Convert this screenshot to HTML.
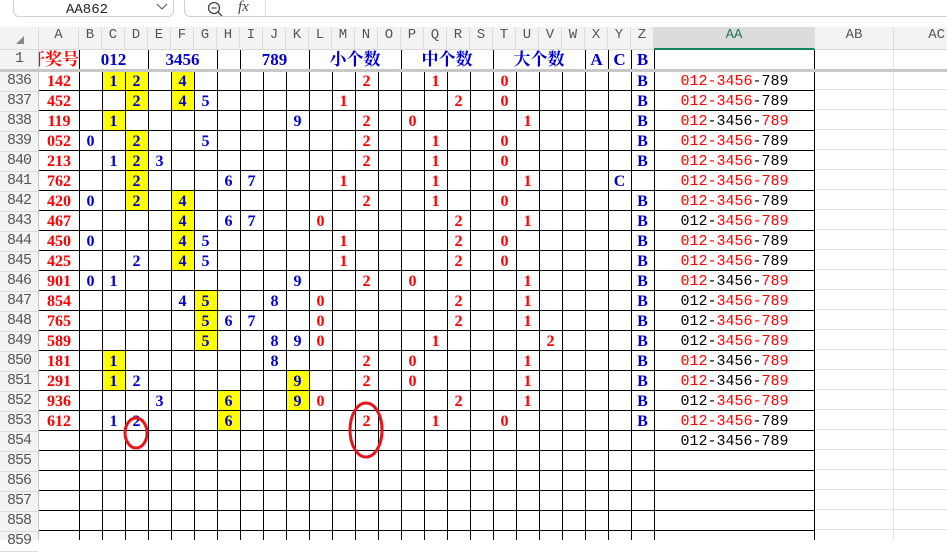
<!DOCTYPE html>
<html><head><meta charset="utf-8"><style>
*{margin:0;padding:0;box-sizing:border-box}
body{width:947px;height:540px;overflow:hidden;background:#fff;position:relative;font-family:"Liberation Serif","Noto Serif CJK SC",serif}
.abs{position:absolute}
#top{left:0;top:0;width:947px;height:27px;background:#fff}
#nb{left:13px;top:-6px;width:161px;height:23px;border:1px solid #d0d0d0;border-radius:6px;font:14px "Liberation Mono",monospace;color:#222}
#fb{left:184px;top:-6px;width:770px;height:23px;border:1px solid #d0d0d0;border-radius:6px}
#colh{left:0;top:27px;width:947px;height:23px;background:#f3f3f3;border-bottom:1px solid #d8d8d8}
.ch{position:absolute;top:0;height:23px;line-height:24px;text-align:center;font:14px "Liberation Mono",monospace;color:#555;border-right:1px solid #dcdcdc}
#rowh{left:0;top:50px;width:39px;height:490px;background:#f3f3f3;border-right:1px solid #c8c8c8}
.rh{position:absolute;left:0;width:38px;height:20px;line-height:21px;text-align:center;font:15px "Liberation Mono",monospace;color:#555;border-bottom:1px solid #dcdcdc;letter-spacing:-1px}
table{position:absolute;left:39px;top:50px;border-collapse:collapse;table-layout:fixed;width:776px}
td{height:20px;padding:0;text-align:center;vertical-align:middle;font-weight:bold;font-size:16px;color:#0000cc;white-space:nowrap;overflow:hidden;line-height:20px}
tr.d td{padding-top:3px;line-height:17px}
td.r{color:#f00}
td.y{background:#ffff00}
td.aa{font:15px "Liberation Mono",monospace;color:#000;font-weight:normal}
td.aa i{font-style:normal;color:#f00}
tr.h td{font-family:"Liberation Serif","Noto Serif CJK SC",serif;font-size:17px}
#vl{left:79px;top:70px;width:576px;height:470px;background:repeating-linear-gradient(to right,#000 0 1px,transparent 1px 23px)}
#hl{left:39px;top:70px;width:776px;height:470px;background:repeating-linear-gradient(to bottom,#000 0 1px,transparent 1px 20px)}
#hg{left:815px;top:50px;width:132px;height:490px;background:repeating-linear-gradient(to bottom,transparent 0 19px,#e2e2e2 19px 20px)}
.v{position:absolute;width:1px;background:#000}
</style></head><body>
<div class="abs" id="top"></div>
<div class="abs" id="nb"><span class="abs" style="left:52px;top:7px">AA862</span><svg class="abs" style="left:142px;top:8px" width="12" height="8"><path d="M1 1 L6 6 L11 1" fill="none" stroke="#666" stroke-width="1.2"/></svg></div>
<div class="abs" id="fb"><svg class="abs" style="left:22px;top:6px" width="18" height="18"><circle cx="7" cy="7" r="5.5" fill="none" stroke="#444" stroke-width="1.3"/><path d="M4.5 7h5M11 11l4 4" stroke="#444" stroke-width="1.3"/></svg><span class="abs" style="left:53px;top:4px;font:italic 15px 'Liberation Serif',serif;color:#444">fx</span><div class="abs" style="left:80px;top:6px;width:1px;height:14px;background:#ddd"></div></div>
<div class="abs" id="colh">
<svg class="abs" style="left:15px;top:8px" width="10" height="10"><path d="M9 1 L9 9 L1 9Z" fill="#888"/></svg>
<div class="ch" style="left:0;width:39px;border-right:1px solid #dcdcdc"></div>
<div class="ch" style="left:39px;width:40px">A</div>
<div class="ch" style="left:79px;width:23px">B</div><div class="ch" style="left:102px;width:23px">C</div><div class="ch" style="left:125px;width:23px">D</div><div class="ch" style="left:148px;width:23px">E</div><div class="ch" style="left:171px;width:23px">F</div><div class="ch" style="left:194px;width:23px">G</div><div class="ch" style="left:217px;width:23px">H</div><div class="ch" style="left:240px;width:23px">I</div><div class="ch" style="left:263px;width:23px">J</div><div class="ch" style="left:286px;width:23px">K</div><div class="ch" style="left:309px;width:23px">L</div><div class="ch" style="left:332px;width:23px">M</div><div class="ch" style="left:355px;width:23px">N</div><div class="ch" style="left:378px;width:23px">O</div><div class="ch" style="left:401px;width:23px">P</div><div class="ch" style="left:424px;width:23px">Q</div><div class="ch" style="left:447px;width:23px">R</div><div class="ch" style="left:470px;width:23px">S</div><div class="ch" style="left:493px;width:23px">T</div><div class="ch" style="left:516px;width:23px">U</div><div class="ch" style="left:539px;width:23px">V</div><div class="ch" style="left:562px;width:23px">W</div><div class="ch" style="left:585px;width:23px">X</div><div class="ch" style="left:608px;width:23px">Y</div><div class="ch" style="left:631px;width:23px">Z</div>
<div class="ch" style="left:654px;width:161px;background:#dcdcdc;color:#1d7a50;border-bottom:2px solid #14875a">AA</div>
<div class="ch" style="left:815px;width:79px">AB</div><div class="ch" style="left:894px;width:60px;text-align:right;padding-right:8px">AC</div>
</div>
<div class="abs" id="hg"></div>
<div class="abs" style="left:893px;top:50px;width:1px;height:490px;background:#e2e2e2"></div>
<div class="abs" id="rowh">
<div class="rh" style="top:0">1</div><div class="rh" style="top:22px">836</div><div class="rh" style="top:42px">837</div><div class="rh" style="top:62px">838</div><div class="rh" style="top:82px">839</div><div class="rh" style="top:102px">840</div><div class="rh" style="top:122px">841</div><div class="rh" style="top:142px">842</div><div class="rh" style="top:162px">843</div><div class="rh" style="top:182px">844</div><div class="rh" style="top:202px">845</div><div class="rh" style="top:222px">846</div><div class="rh" style="top:242px">847</div><div class="rh" style="top:262px">848</div><div class="rh" style="top:282px">849</div><div class="rh" style="top:302px">850</div><div class="rh" style="top:322px">851</div><div class="rh" style="top:342px">852</div><div class="rh" style="top:362px">853</div><div class="rh" style="top:382px">854</div><div class="rh" style="top:402px">855</div><div class="rh" style="top:422px">856</div><div class="rh" style="top:442px">857</div><div class="rh" style="top:462px">858</div><div class="rh" style="top:482px">859</div>
</div>
<table>
<colgroup><col style="width:40px"><col span="25" style="width:23px"><col style="width:161px"></colgroup>
<tr class="h"><td class="r" style="direction:rtl;text-align:right">开奖号</td><td colspan="3">012</td><td colspan="3">3456</td><td></td><td colspan="3">789</td><td colspan="4">小个数</td><td colspan="4">中个数</td><td colspan="4">大个数</td><td>A</td><td>C</td><td>B</td><td></td></tr>
<tr class="d"><td class="r">142</td><td></td><td class="y">1</td><td class="y">2</td><td></td><td class="y">4</td><td></td><td></td><td></td><td></td><td></td><td></td><td></td><td class="r">2</td><td></td><td></td><td class="r">1</td><td></td><td></td><td class="r">0</td><td></td><td></td><td></td><td></td><td></td><td>B</td><td class="aa"><i>012-3456</i>-789</td></tr>
<tr class="d"><td class="r">452</td><td></td><td></td><td class="y">2</td><td></td><td class="y">4</td><td>5</td><td></td><td></td><td></td><td></td><td></td><td class="r">1</td><td></td><td></td><td></td><td></td><td class="r">2</td><td></td><td class="r">0</td><td></td><td></td><td></td><td></td><td></td><td>B</td><td class="aa"><i>012-3456</i>-789</td></tr>
<tr class="d"><td class="r">119</td><td></td><td class="y">1</td><td></td><td></td><td></td><td></td><td></td><td></td><td></td><td>9</td><td></td><td></td><td class="r">2</td><td></td><td class="r">0</td><td></td><td></td><td></td><td></td><td class="r">1</td><td></td><td></td><td></td><td></td><td>B</td><td class="aa"><i>012</i>-3456-<i>789</i></td></tr>
<tr class="d"><td class="r">052</td><td>0</td><td></td><td class="y">2</td><td></td><td></td><td>5</td><td></td><td></td><td></td><td></td><td></td><td></td><td class="r">2</td><td></td><td></td><td class="r">1</td><td></td><td></td><td class="r">0</td><td></td><td></td><td></td><td></td><td></td><td>B</td><td class="aa"><i>012-3456</i>-789</td></tr>
<tr class="d"><td class="r">213</td><td></td><td>1</td><td class="y">2</td><td>3</td><td></td><td></td><td></td><td></td><td></td><td></td><td></td><td></td><td class="r">2</td><td></td><td></td><td class="r">1</td><td></td><td></td><td class="r">0</td><td></td><td></td><td></td><td></td><td></td><td>B</td><td class="aa"><i>012-3456</i>-789</td></tr>
<tr class="d"><td class="r">762</td><td></td><td></td><td class="y">2</td><td></td><td></td><td></td><td>6</td><td>7</td><td></td><td></td><td></td><td class="r">1</td><td></td><td></td><td></td><td class="r">1</td><td></td><td></td><td></td><td class="r">1</td><td></td><td></td><td></td><td>C</td><td></td><td class="aa"><i>012-3456-789</i></td></tr>
<tr class="d"><td class="r">420</td><td>0</td><td></td><td class="y">2</td><td></td><td class="y">4</td><td></td><td></td><td></td><td></td><td></td><td></td><td></td><td class="r">2</td><td></td><td></td><td class="r">1</td><td></td><td></td><td class="r">0</td><td></td><td></td><td></td><td></td><td></td><td>B</td><td class="aa"><i>012-3456</i>-789</td></tr>
<tr class="d"><td class="r">467</td><td></td><td></td><td></td><td></td><td class="y">4</td><td></td><td>6</td><td>7</td><td></td><td></td><td class="r">0</td><td></td><td></td><td></td><td></td><td></td><td class="r">2</td><td></td><td></td><td class="r">1</td><td></td><td></td><td></td><td></td><td>B</td><td class="aa">012-<i>3456-789</i></td></tr>
<tr class="d"><td class="r">450</td><td>0</td><td></td><td></td><td></td><td class="y">4</td><td>5</td><td></td><td></td><td></td><td></td><td></td><td class="r">1</td><td></td><td></td><td></td><td></td><td class="r">2</td><td></td><td class="r">0</td><td></td><td></td><td></td><td></td><td></td><td>B</td><td class="aa"><i>012-3456</i>-789</td></tr>
<tr class="d"><td class="r">425</td><td></td><td></td><td>2</td><td></td><td class="y">4</td><td>5</td><td></td><td></td><td></td><td></td><td></td><td class="r">1</td><td></td><td></td><td></td><td></td><td class="r">2</td><td></td><td class="r">0</td><td></td><td></td><td></td><td></td><td></td><td>B</td><td class="aa"><i>012-3456</i>-789</td></tr>
<tr class="d"><td class="r">901</td><td>0</td><td>1</td><td></td><td></td><td></td><td></td><td></td><td></td><td></td><td>9</td><td></td><td></td><td class="r">2</td><td></td><td class="r">0</td><td></td><td></td><td></td><td></td><td class="r">1</td><td></td><td></td><td></td><td></td><td>B</td><td class="aa"><i>012</i>-3456-<i>789</i></td></tr>
<tr class="d"><td class="r">854</td><td></td><td></td><td></td><td></td><td>4</td><td class="y">5</td><td></td><td></td><td>8</td><td></td><td class="r">0</td><td></td><td></td><td></td><td></td><td></td><td class="r">2</td><td></td><td></td><td class="r">1</td><td></td><td></td><td></td><td></td><td>B</td><td class="aa">012-<i>3456-789</i></td></tr>
<tr class="d"><td class="r">765</td><td></td><td></td><td></td><td></td><td></td><td class="y">5</td><td>6</td><td>7</td><td></td><td></td><td class="r">0</td><td></td><td></td><td></td><td></td><td></td><td class="r">2</td><td></td><td></td><td class="r">1</td><td></td><td></td><td></td><td></td><td>B</td><td class="aa">012-<i>3456-789</i></td></tr>
<tr class="d"><td class="r">589</td><td></td><td></td><td></td><td></td><td></td><td class="y">5</td><td></td><td></td><td>8</td><td>9</td><td class="r">0</td><td></td><td></td><td></td><td></td><td class="r">1</td><td></td><td></td><td></td><td></td><td class="r">2</td><td></td><td></td><td></td><td>B</td><td class="aa">012-<i>3456-789</i></td></tr>
<tr class="d"><td class="r">181</td><td></td><td class="y">1</td><td></td><td></td><td></td><td></td><td></td><td></td><td>8</td><td></td><td></td><td></td><td class="r">2</td><td></td><td class="r">0</td><td></td><td></td><td></td><td></td><td class="r">1</td><td></td><td></td><td></td><td></td><td>B</td><td class="aa"><i>012</i>-3456-<i>789</i></td></tr>
<tr class="d"><td class="r">291</td><td></td><td class="y">1</td><td>2</td><td></td><td></td><td></td><td></td><td></td><td></td><td class="y">9</td><td></td><td></td><td class="r">2</td><td></td><td class="r">0</td><td></td><td></td><td></td><td></td><td class="r">1</td><td></td><td></td><td></td><td></td><td>B</td><td class="aa"><i>012</i>-3456-<i>789</i></td></tr>
<tr class="d"><td class="r">936</td><td></td><td></td><td></td><td>3</td><td></td><td></td><td class="y">6</td><td></td><td></td><td class="y">9</td><td class="r">0</td><td></td><td></td><td></td><td></td><td></td><td class="r">2</td><td></td><td></td><td class="r">1</td><td></td><td></td><td></td><td></td><td>B</td><td class="aa">012-<i>3456-789</i></td></tr>
<tr class="d"><td class="r">612</td><td></td><td>1</td><td>2</td><td></td><td></td><td></td><td class="y">6</td><td></td><td></td><td></td><td></td><td></td><td class="r">2</td><td></td><td></td><td class="r">1</td><td></td><td></td><td class="r">0</td><td></td><td></td><td></td><td></td><td></td><td>B</td><td class="aa"><i>012-3456</i>-789</td></tr>
<tr class="d"><td></td><td></td><td></td><td></td><td></td><td></td><td></td><td></td><td></td><td></td><td></td><td></td><td></td><td></td><td></td><td></td><td></td><td></td><td></td><td></td><td></td><td></td><td></td><td></td><td></td><td></td><td class="aa">012-3456-789</td></tr>
<tr><td></td><td colspan="26"></td></tr><tr><td></td><td colspan="26"></td></tr><tr><td></td><td colspan="26"></td></tr><tr><td></td><td colspan="26"></td></tr><tr><td></td><td colspan="26"></td></tr>
</table>
<div class="abs" id="vl"></div>
<div class="abs" id="hl"></div>
<div class="v" style="left:814px;top:50px;height:490px"></div>
<div class="v" style="left:79px;top:50px;height:20px"></div><div class="v" style="left:148px;top:50px;height:20px"></div><div class="v" style="left:217px;top:50px;height:20px"></div><div class="v" style="left:240px;top:50px;height:20px"></div><div class="v" style="left:309px;top:50px;height:20px"></div><div class="v" style="left:401px;top:50px;height:20px"></div><div class="v" style="left:493px;top:50px;height:20px"></div><div class="v" style="left:585px;top:50px;height:20px"></div><div class="v" style="left:608px;top:50px;height:20px"></div><div class="v" style="left:631px;top:50px;height:20px"></div><div class="v" style="left:654px;top:50px;height:20px"></div>
<div class="abs" style="left:0;top:69px;width:947px;height:3px;background:#c8c8c8"></div>
<svg class="abs" style="left:0;top:0" width="947" height="540"><ellipse cx="136" cy="433" rx="11" ry="15" fill="none" stroke="#e8141c" stroke-width="3"/><ellipse cx="366" cy="430" rx="16" ry="27" fill="none" stroke="#e8141c" stroke-width="3"/></svg>
</body></html>
